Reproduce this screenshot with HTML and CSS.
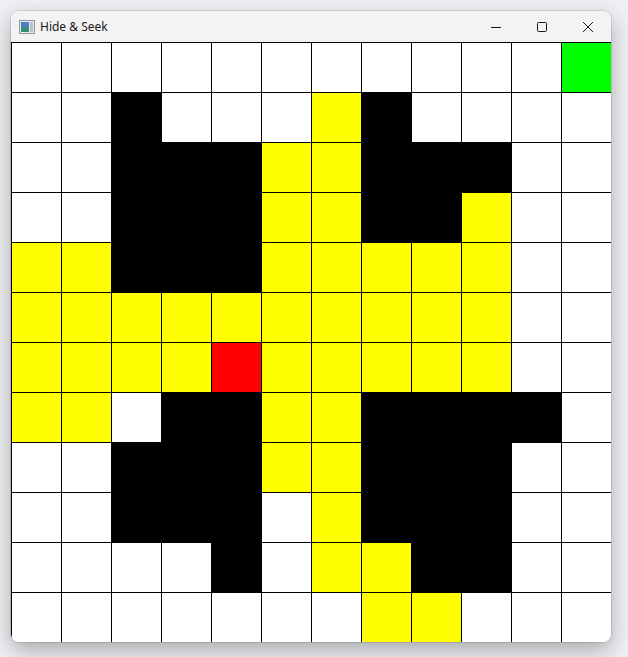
FILE: index.html
```html
<!DOCTYPE html>
<html>
<head>
<meta charset="utf-8">
<title>Hide &amp; Seek</title>
<link rel="stylesheet" href="styles.css">
</head>
<body>
<div class="window">
  <div class="titlebar">
    <svg class="app-icon" width="16" height="14" viewBox="0 0 16 14">
      <rect x="0.5" y="0.5" width="15" height="13" fill="#e8ecef" stroke="#8a96a0"/>
      <rect x="2" y="2" width="8" height="10" fill="#3a8f7a"/>
      <rect x="2" y="2" width="8" height="5" fill="#4f7fc0"/>
      <rect x="11" y="2" width="3" height="10" fill="#b9c2c9"/>
    </svg>
    <span class="title">Hide &amp; Seek</span>
    <div class="controls">
      <svg class="ctl" width="46" height="30" viewBox="0 0 46 30"><line x1="18" y1="15.5" x2="28" y2="15.5" stroke="#1a1a1a" stroke-width="1"/></svg>
      <svg class="ctl" width="46" height="30" viewBox="0 0 46 30"><rect x="18.5" y="10.5" width="9" height="9" rx="1" fill="none" stroke="#1a1a1a" stroke-width="1"/></svg>
      <svg class="ctl" width="46" height="30" viewBox="0 0 46 30"><path d="M18 10 L28 20 M28 10 L18 20" stroke="#1a1a1a" stroke-width="1"/></svg>
    </div>
  </div>
  <div class="grid">
    <div class="c w"></div><div class="c w"></div><div class="c w"></div><div class="c w"></div><div class="c w"></div><div class="c w"></div><div class="c w"></div><div class="c w"></div><div class="c w"></div><div class="c w"></div><div class="c w"></div><div class="c g"></div>
    <div class="c w"></div><div class="c w"></div><div class="c b"></div><div class="c w"></div><div class="c w"></div><div class="c w"></div><div class="c y"></div><div class="c b"></div><div class="c w"></div><div class="c w"></div><div class="c w"></div><div class="c w"></div>
    <div class="c w"></div><div class="c w"></div><div class="c b"></div><div class="c b"></div><div class="c b"></div><div class="c y"></div><div class="c y"></div><div class="c b"></div><div class="c b"></div><div class="c b"></div><div class="c w"></div><div class="c w"></div>
    <div class="c w"></div><div class="c w"></div><div class="c b"></div><div class="c b"></div><div class="c b"></div><div class="c y"></div><div class="c y"></div><div class="c b"></div><div class="c b"></div><div class="c y"></div><div class="c w"></div><div class="c w"></div>
    <div class="c y"></div><div class="c y"></div><div class="c b"></div><div class="c b"></div><div class="c b"></div><div class="c y"></div><div class="c y"></div><div class="c y"></div><div class="c y"></div><div class="c y"></div><div class="c w"></div><div class="c w"></div>
    <div class="c y"></div><div class="c y"></div><div class="c y"></div><div class="c y"></div><div class="c y"></div><div class="c y"></div><div class="c y"></div><div class="c y"></div><div class="c y"></div><div class="c y"></div><div class="c w"></div><div class="c w"></div>
    <div class="c y"></div><div class="c y"></div><div class="c y"></div><div class="c y"></div><div class="c r"></div><div class="c y"></div><div class="c y"></div><div class="c y"></div><div class="c y"></div><div class="c y"></div><div class="c w"></div><div class="c w"></div>
    <div class="c y"></div><div class="c y"></div><div class="c w"></div><div class="c b"></div><div class="c b"></div><div class="c y"></div><div class="c y"></div><div class="c b"></div><div class="c b"></div><div class="c b"></div><div class="c b"></div><div class="c w"></div>
    <div class="c w"></div><div class="c w"></div><div class="c b"></div><div class="c b"></div><div class="c b"></div><div class="c y"></div><div class="c y"></div><div class="c b"></div><div class="c b"></div><div class="c b"></div><div class="c w"></div><div class="c w"></div>
    <div class="c w"></div><div class="c w"></div><div class="c b"></div><div class="c b"></div><div class="c b"></div><div class="c w"></div><div class="c y"></div><div class="c b"></div><div class="c b"></div><div class="c b"></div><div class="c w"></div><div class="c w"></div>
    <div class="c w"></div><div class="c w"></div><div class="c w"></div><div class="c w"></div><div class="c b"></div><div class="c w"></div><div class="c y"></div><div class="c y"></div><div class="c b"></div><div class="c b"></div><div class="c w"></div><div class="c w"></div>
    <div class="c w"></div><div class="c w"></div><div class="c w"></div><div class="c w"></div><div class="c w"></div><div class="c w"></div><div class="c w"></div><div class="c y"></div><div class="c y"></div><div class="c w"></div><div class="c w"></div><div class="c w"></div>
  </div>
</div>
</body>
</html>
```

FILE: styles.css
```css
html, body {
  margin: 0;
  padding: 0;
}
body {
  width: 628px;
  height: 657px;
  background: #eef0f3;
  padding: 11px 0 0 11px;
  box-sizing: border-box;
  overflow: hidden;
  font-family: "Noto Sans", "Open Sans", "Liberation Sans", sans-serif;
}
.window {
  width: 600px;
  background: #f3f3f3;
  border-radius: 8px;
  overflow: hidden;
  box-shadow: 0 8px 22px rgba(0, 0, 0, 0.3), 0 0 0 1px rgba(0, 0, 0, 0.1);
}
.titlebar {
  height: 31px;
  display: flex;
  align-items: center;
  background: #f3f3f3;
}
.app-icon {
  margin-left: 8px;
}
.title {
  margin-left: 5px;
  font-size: 12px;
  color: #1a1a1a;
}
.controls {
  margin-left: auto;
  display: flex;
  align-items: center;
  height: 31px;
}
.ctl {
  display: block;
}
.grid {
  display: grid;
  grid-template-columns: repeat(12, 50px);
  grid-template-rows: repeat(12, 50px);
  width: 600px;
  height: 600px;
}
.c {
  box-sizing: border-box;
  border-left: 1px solid #000;
  border-top: 1px solid #000;
}
.w { background: #ffffff; }
.b { background: #000000; }
.y { background: #ffff00; }
.r { background: #ff0000; }
.g { background: #00ff00; }
```
